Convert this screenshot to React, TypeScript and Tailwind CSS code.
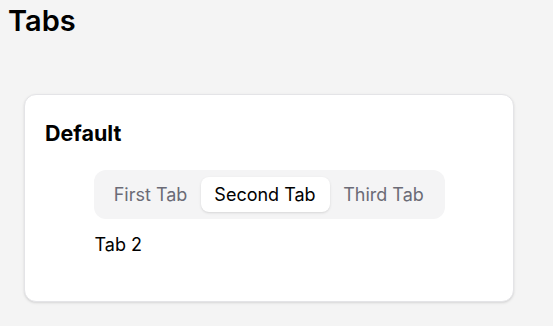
export default function App() {
  return (
    <div className="min-h-screen bg-[#f4f4f4] px-2 pt-[3px] font-['Inter',sans-serif] text-black">
      <h1 className="text-[29px] font-semibold leading-9">Tabs</h1>
      <div className="mx-4 mt-[55px] w-[490px] rounded-xl border border-[#e4e4e7] bg-white px-5 pb-[42px] pt-6 shadow-sm">
        <h2 className="text-[21.5px] font-bold leading-7">Default</h2>
        <div className="mt-[23px] flex justify-center">
          <div>
            <div className="flex items-center rounded-xl bg-[#f4f4f5] p-[7px]">
              <button className="h-[35px] w-[100px] rounded-lg text-lg text-[#6b6b76]">First Tab</button>
              <button className="h-[35px] w-[129px] rounded-lg bg-white text-lg text-black shadow-sm">Second Tab</button>
              <button className="h-[35px] w-[108px] rounded-lg text-lg text-[#6b6b76]">Third Tab</button>
            </div>
            <div className="mt-[12px] pl-px text-lg leading-7">Tab 2</div>
          </div>
        </div>
      </div>
    </div>
  );
}
